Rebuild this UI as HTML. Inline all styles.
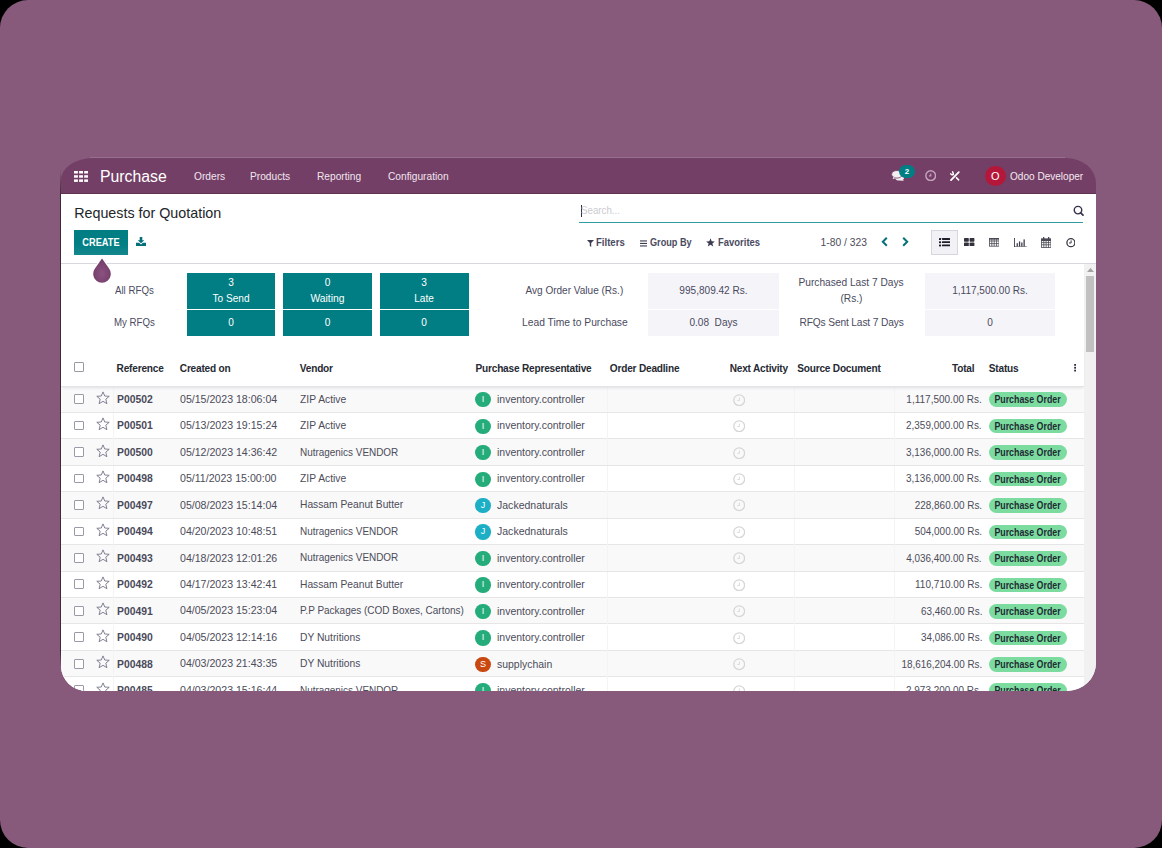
<!DOCTYPE html>
<html><head><meta charset="utf-8">
<style>
*{box-sizing:border-box;margin:0;padding:0}
html,body{width:1162px;height:848px;overflow:hidden;background:#000}
body{font-family:"Liberation Sans",sans-serif;position:relative}
.bg{position:absolute;left:0;top:0;width:1162px;height:848px;border-radius:28px;background:#875A7B}
.frame{position:absolute;left:61px;top:158px;width:1035px;height:533px;border-radius:32px 30px 29px 26px / 22px 25px 28px 25px;overflow:hidden;background:transparent}
.content{position:absolute;left:0;top:35px;width:1035px;height:498px;background:#fff}
.lline{position:absolute;left:60px;top:170px;width:1.2px;height:497px;background:linear-gradient(rgba(50,30,45,0),#3d2b37 5%,#3d2b37 97%,rgba(50,30,45,0))}
.nav{position:absolute;left:0;top:0;width:1040px;height:36px;background:#743F66;border-bottom:1px solid #5f3254}
.t{position:absolute;white-space:nowrap;line-height:1}
.b{font-weight:bold}
.nv{color:#f0e6ee;font-size:10.2px;top:13.6px}
.row{position:absolute;left:0;width:1023px;height:26.4px;border-bottom:1px solid #e6e6e6}
.row .t{top:8.5px;font-size:10.3px;color:#4c4c5a}
.cl{position:absolute;top:0;width:1px;height:26px;background:#f4f4f5}
.cb{position:absolute;left:13px;top:7.9px;width:9.8px;height:9.8px;border:1px solid #9a9aa6;border-radius:1px;background:#fff}
.star{position:absolute;left:35.2px;top:4.3px;width:14px;height:14px}
.ref{left:56px;font-size:10.35px!important;color:#4a4a5a!important}
.dt{left:119px;font-size:10.6px!important;top:7.4px!important}
.ven{left:239px;top:8.3px!important;transform-origin:0 50%}
.av{position:absolute;left:414.2px;top:5.8px;width:15.4px;height:15.4px;border-radius:50%;color:#fff;font-size:9px;text-align:center;line-height:15.4px}
.rep{left:435.5px;font-size:10.45px!important;transform-origin:0 50%}
.clk{position:absolute;left:671.5px;top:7.3px;width:12.4px;height:12.4px}
.tot{right:102px;text-align:right;font-size:10.2px!important;top:8.6px!important;transform-origin:100% 50%}
.badge{position:absolute;left:928px;top:6px;width:78px;height:14.5px;border-radius:8px;background:#7cdca0;color:#1e2b33;font-weight:bold;font-size:10px;line-height:15.3px;text-align:center}
.badge i{font-style:normal;display:inline-block;transform:scaleX(0.8823)}
.th{position:absolute;top:5px;font-size:10.1px;letter-spacing:-0.2px;font-weight:bold;color:#262a33;line-height:1;margin-top:-0.1px}
.dash{position:absolute;background:#017E84;color:#fff;font-size:10px;text-align:center}
.gbox{position:absolute;background:#f5f4f9;color:#4c4c5a;font-size:10px;text-align:center}
.lbl{position:absolute;color:#4a4a5e;font-size:10.1px;text-align:center;white-space:nowrap;line-height:1}
</style></head><body>
<div class="bg"></div>
<div class="lline"></div>
<div style="position:absolute;left:90px;top:157px;width:975px;height:1px;background:#96708c"></div>
<div class="frame">
  <div class="content"></div>
  <div class="nav">
    <svg style="position:absolute;left:12.9px;top:12.6px" width="14.2" height="11" viewBox="0 0 14.2 11"><g fill="#fff"><rect x="0" y="0" width="3.9" height="2.5"/><rect x="5.1" y="0" width="3.9" height="2.5"/><rect x="10.2" y="0" width="3.9" height="2.5"/><rect x="0" y="4.2" width="3.9" height="2.5"/><rect x="5.1" y="4.2" width="3.9" height="2.5"/><rect x="10.2" y="4.2" width="3.9" height="2.5"/><rect x="0" y="8.4" width="3.9" height="2.5"/><rect x="5.1" y="8.4" width="3.9" height="2.5"/><rect x="10.2" y="8.4" width="3.9" height="2.5"/></g></svg>
    <span class="t" style="left:39px;top:10.5px;font-size:15.8px;color:#fff">Purchase</span>
    <span class="t nv" style="left:133px">Orders</span>
    <span class="t nv" style="left:189px">Products</span>
    <span class="t nv" style="left:256px">Reporting</span>
    <span class="t nv" style="left:327px">Configuration</span>
    <!-- right icons -->
    <svg style="position:absolute;left:829.5px;top:12px" width="15" height="12" viewBox="0 0 15 12"><ellipse cx="8.6" cy="7.4" rx="4.6" ry="3.1" fill="#f3eef2"/><path d="M11.2 9.6 L13.3 11 L9.4 10.3Z" fill="#f3eef2"/><ellipse cx="6" cy="4.3" rx="5.4" ry="3.8" fill="#f3eef2" stroke="#743F66" stroke-width="0.8"/><path d="M2.2 7.1 L1.7 9.2 L4.6 7.9Z" fill="#f3eef2"/></svg>
    <span style="position:absolute;left:838px;top:7.1px;width:16.2px;height:13.3px;border-radius:7px;background:#017E84;color:#fff;font-size:8px;text-align:center;line-height:13.5px;font-weight:bold">2</span>
    <svg style="position:absolute;left:864px;top:11.8px" width="11.4" height="11.4" viewBox="0 0 11.4 11.4"><circle cx="5.7" cy="5.7" r="4.85" fill="none" stroke="#c4a3bd" stroke-width="1.45"/><path d="M5.8 3.6 V5.9 H3.9" fill="none" stroke="#c4a3bd" stroke-width="1.1"/></svg>
    <svg style="position:absolute;left:889px;top:13px" width="10" height="10" viewBox="0 0 10 10"><path d="M2.6 0.9 Q3.9 3.2 2.7 3.7 Q1.6 4.1 0.8 2.9" fill="none" stroke="#fff" stroke-width="1.5" stroke-linecap="round"/><path d="M3.2 3.5 L8.6 8.9" stroke="#fff" stroke-width="1.5" stroke-linecap="round"/><path d="M8.8 1.2 L1 9.2" stroke="#743F66" stroke-width="3.2"/><path d="M8.8 1.1 L1 9.1" stroke="#fff" stroke-width="1.8" stroke-linecap="round"/></svg>
    <span style="position:absolute;left:924px;top:7.5px;width:20.5px;height:20.5px;border-radius:50%;background:#b5173a;color:#fff;font-size:11px;text-align:center;line-height:20.5px">O</span>
    <span class="t nv" style="left:949px;color:#f3eaf1;font-size:10.2px;top:13.6px;transform:scaleX(0.9868);transform-origin:0 50%">Odoo Developer</span>
  </div>
  <!-- control panel -->
  <span class="t" style="left:13.2px;top:48px;font-size:14.3px;color:#212529">Requests for Quotation</span>
  <div style="position:absolute;left:13px;top:72px;width:54px;height:25px;background:linear-gradient(#017E84 55%,#14888d);color:#fff;font-weight:bold;font-size:9.24px;line-height:25px;text-align:center"><span style="display:inline-block;position:relative;top:1.2px;transform:scale(1,1.17);transform-origin:50% 56%">CREATE</span></div>
  <svg style="position:absolute;left:75px;top:79px" width="10" height="9" viewBox="0 0 10 9"><path d="M3.7 0 H6.3 V3.2 H8.3 L5 6.3 L1.7 3.2 H3.7 Z" fill="#04707d"/><path d="M0 5.8 H3.2 L5 7.4 L6.8 5.8 H10 V9 H0Z" fill="#04707d"/></svg>
  <!-- search -->
  <div style="position:absolute;left:517.5px;top:64px;width:504.5px;height:1px;background:#2e9ca1"></div>
  <div style="position:absolute;left:519.5px;top:46.5px;width:1px;height:12px;background:#333"></div>
  <span class="t" style="left:519.8px;top:47.6px;font-size:10.1px;color:#cbcbd0;transform:scaleX(0.9649);transform-origin:0 50%">Search...</span>
  <svg style="position:absolute;left:1011.5px;top:47px" width="11" height="11" viewBox="0 0 11 11"><circle cx="5" cy="5.1" r="3.75" fill="none" stroke="#34344a" stroke-width="1.45"/><path d="M7.7 7.8 L10 10.1" stroke="#34344a" stroke-width="1.7" stroke-linecap="round"/></svg>
  <!-- filters -->
  <svg style="position:absolute;left:525.5px;top:81.6px" width="7" height="7" viewBox="0 0 7 7"><path d="M0 0 H7 L4.2 3 V7 L2.8 6 V3Z" fill="#3c3c50"/></svg>
  <span class="t b" style="left:535px;top:80px;font-size:10.2px;color:#4a4a60;transform:scaleX(0.9409);transform-origin:0 50%">Filters</span>
  <svg style="position:absolute;left:578.8px;top:81.5px" width="7.5" height="7" viewBox="0 0 7.5 7"><g fill="#3c3c50"><rect x="0" y="0.4" width="7.5" height="1.1"/><rect x="0" y="2.9" width="7.5" height="1.1"/><rect x="0" y="5.4" width="7.5" height="1.1"/></g></svg>
  <span class="t b" style="left:588.5px;top:80px;font-size:10.2px;color:#4a4a60;transform:scaleX(0.8974);transform-origin:0 50%">Group By</span>
  <svg style="position:absolute;left:645px;top:80px" width="9" height="9" viewBox="0 0 10 10"><path d="M5 0.3 L6.3 3.6 L9.8 3.8 L7.1 6 L8 9.5 L5 7.6 L2 9.5 L2.9 6 L0.2 3.8 L3.7 3.6Z" fill="#3c3c50"/></svg>
  <span class="t b" style="left:656.5px;top:80px;font-size:10.2px;color:#4a4a60;transform:scaleX(0.9283);transform-origin:0 50%">Favorites</span>
  <!-- pager -->
  <span class="t" style="left:759.5px;top:80px;font-size:10.3px;color:#4c4c5a">1-80 / 323</span>
  <svg style="position:absolute;left:819.8px;top:79.3px" width="7" height="9.6" viewBox="0 0 7 9.6"><path d="M5.8 0.8 L1.8 4.8 L5.8 8.8" fill="none" stroke="#06707b" stroke-width="2"/></svg>
  <svg style="position:absolute;left:841.3px;top:79.3px" width="7" height="9.6" viewBox="0 0 7 9.6"><path d="M1.2 0.8 L5.2 4.8 L1.2 8.8" fill="none" stroke="#06707b" stroke-width="2"/></svg>
  <!-- view switcher -->
  <div style="position:absolute;left:870px;top:72px;width:27px;height:25px;background:#f2f1f6;border:1px solid #d6d6de"></div>
  <svg style="position:absolute;left:877.8px;top:80.3px" width="11.2" height="8.5" viewBox="0 0 11.2 8.5"><g fill="#1f1f2a"><rect x="0" y="0" width="2.1" height="2" rx="0.6"/><rect x="3" y="0.1" width="8.2" height="1.8" rx="0.4"/><rect x="0" y="3.2" width="2.1" height="2" rx="0.6"/><rect x="3" y="3.3" width="8.2" height="1.8" rx="0.4"/><rect x="0" y="6.4" width="2.1" height="2" rx="0.6"/><rect x="3" y="6.5" width="8.2" height="1.8" rx="0.4"/></g></svg>
  <svg style="position:absolute;left:903.3px;top:80px" width="10.4" height="8.4" viewBox="0 0 10.4 8.4"><g fill="#33333f"><rect x="0" y="0" width="4.8" height="3.8" rx="0.7"/><rect x="5.6" y="0" width="4.8" height="3.8" rx="0.7"/><rect x="0" y="4.6" width="4.8" height="3.8" rx="0.7"/><rect x="5.6" y="4.6" width="4.8" height="3.8" rx="0.7"/></g></svg>
  <svg style="position:absolute;left:928px;top:80px" width="10.4" height="8.6" viewBox="0 0 10.4 8.6"><g fill="none" stroke="#4a4a56" stroke-width="0.8"><rect x="0.4" y="0.4" width="9.6" height="7.8"/><path d="M0.4 3 H10 M0.4 5.6 H10 M2.8 0.4 V8.2 M5.2 0.4 V8.2 M7.6 0.4 V8.2"/></g><rect x="0" y="0" width="10.4" height="1.6" fill="#4a4a56"/></svg>
  <svg style="position:absolute;left:952.8px;top:79.6px" width="12.8" height="9.4" viewBox="0 0 12.8 9.4"><g fill="#3f3f4b"><rect x="0" y="0" width="0.9" height="9.4"/><rect x="0" y="8.5" width="12.8" height="0.9"/><rect x="2.6" y="5.2" width="1.3" height="3.3"/><rect x="4.9" y="3.4" width="1.3" height="5.1"/><rect x="7.2" y="4.5" width="1.3" height="4"/><rect x="9.5" y="1.4" width="1.3" height="7.1"/></g></svg>
  <svg style="position:absolute;left:979.7px;top:79px" width="10.3" height="11" viewBox="0 0 10.3 11"><g fill="none" stroke="#4a4a56" stroke-width="0.8"><rect x="0.4" y="2" width="9.5" height="8.6"/><path d="M0.4 5.6 H9.9 M0.4 7.8 H9.9 M2.8 4 V10.6 M5.15 4 V10.6 M7.5 4 V10.6"/></g><rect x="0" y="1.6" width="10.3" height="2.4" fill="#4a4a56"/><rect x="2" y="0" width="1.3" height="2.8" fill="#4a4a56"/><rect x="7" y="0" width="1.3" height="2.8" fill="#4a4a56"/></svg>
  <svg style="position:absolute;left:1004.5px;top:80.3px" width="9.8" height="9.4" viewBox="0 0 9.8 9.4"><circle cx="4.9" cy="4.7" r="4" fill="none" stroke="#3a3a46" stroke-width="1.3"/><path d="M5.1 2.4 V5 H3.1" fill="none" stroke="#3a3a46" stroke-width="1"/></svg>
  <!-- separator -->
  <div style="position:absolute;left:0;top:105px;width:1036px;height:1px;background:#d8d8e0"></div>
  <!-- scrollbar -->
  <div style="position:absolute;left:1023px;top:106px;width:13px;height:427px;background:#f1f1f1"></div>
  <div style="position:absolute;left:1024.6px;top:118px;width:8.4px;height:75.8px;background:#c1c1c1"></div>
  <svg style="position:absolute;left:1025px;top:109px" width="9" height="6" viewBox="0 0 9 6"><path d="M4.5 1 L8 5 H1Z" fill="#a3a3a3"/></svg>
  <!-- dashboard -->
  <span class="lbl" style="left:54px;top:127.5px;font-size:10.1px;transform:scaleX(0.9604);transform-origin:0 50%">All RFQs</span>
  <span class="lbl" style="left:53px;top:159.5px;font-size:10.1px;transform:scaleX(0.9592);transform-origin:0 50%">My RFQs</span>
  <div class="dash" style="left:126px;top:114.5px;width:88px;height:36.5px"></div>
  <div class="dash" style="left:222px;top:114.5px;width:89px;height:36.5px"></div>
  <div class="dash" style="left:318.5px;top:114.5px;width:89px;height:36.5px"></div>
  <div class="dash" style="left:126px;top:152px;width:88px;height:25.5px"></div>
  <div class="dash" style="left:222px;top:152px;width:89px;height:25.5px"></div>
  <div class="dash" style="left:318.5px;top:152px;width:89px;height:25.5px"></div>
  <span class="lbl" style="left:126px;width:88px;top:119.5px;color:#fff;font-size:10.1px">3</span>
  <span class="lbl" style="left:126px;width:88px;top:135.5px;color:#fff;font-size:10.08px">To Send</span>
  <span class="lbl" style="left:222px;width:89px;top:119.5px;color:#fff;font-size:10.1px">0</span>
  <span class="lbl" style="left:222px;width:89px;top:135.5px;color:#fff;font-size:10.3px">Waiting</span>
  <span class="lbl" style="left:318.5px;width:89px;top:119.5px;color:#fff;font-size:10.1px">3</span>
  <span class="lbl" style="left:318.5px;width:89px;top:135.5px;color:#fff;font-size:10.07px">Late</span>
  <span class="lbl" style="left:126px;width:88px;top:159.5px;color:#fff;font-size:10.1px">0</span>
  <span class="lbl" style="left:222px;width:89px;top:159.5px;color:#fff;font-size:10.1px">0</span>
  <span class="lbl" style="left:318.5px;width:89px;top:159.5px;color:#fff;font-size:10.1px">0</span>
  <div class="gbox" style="left:587px;top:114.5px;width:131px;height:36.5px"></div>
  <div class="gbox" style="left:587px;top:152px;width:131px;height:25.5px"></div>
  <div class="gbox" style="left:864px;top:114.5px;width:130px;height:36.5px"></div>
  <div class="gbox" style="left:864px;top:152px;width:130px;height:25.5px"></div>
  <span class="lbl" style="left:464.5px;top:127.5px;font-size:10.04px">Avg Order Value (Rs.)</span>
  <span class="lbl" style="left:461px;top:159.5px;font-size:10.29px">Lead Time to Purchase</span>
  <span class="lbl" style="left:587px;width:131px;top:127.5px;font-size:10.07px">995,809.42 Rs.</span>
  <span class="lbl" style="left:587px;width:131px;top:159.5px;font-size:10.07px">0.08&nbsp; Days</span>
  <span class="lbl" style="left:737.5px;top:120px;font-size:10.19px">Purchased Last 7 Days</span>
  <span class="lbl" style="left:737.5px;width:106px;top:135.5px;font-size:10.19px">(Rs.)</span>
  <span class="lbl" style="left:738.5px;top:159.5px;font-size:10.19px;letter-spacing:-0.13px">RFQs Sent Last 7 Days</span>
  <span class="lbl" style="left:864px;width:130px;top:127.5px;font-size:10.02px">1,117,500.00 Rs.</span>
  <span class="lbl" style="left:864px;width:130px;top:159.5px;font-size:10.1px">0</span>
  <!-- table header -->
  <div style="position:absolute;left:0;top:187px;width:1023px;height:42px;background:#fff;border-bottom:1px solid #e4e4e8;box-shadow:0 2px 3px -1px rgba(0,0,0,0.10);z-index:2">
    <span class="cb" style="top:17.2px"></span>
    <span class="th" style="left:55.6px;top:19px">Reference</span>
    <span class="th" style="left:118.8px;top:19px">Created on</span>
    <span class="th" style="left:238.8px;top:19px">Vendor</span>
    <span class="th" style="left:414.5px;top:19px">Purchase Representative</span>
    <span class="th" style="left:548.8px;top:19px">Order Deadline</span>
    <span class="th" style="left:668.7px;top:19px">Next Activity</span>
    <span class="th" style="left:736.2px;top:19px">Source Document</span>
    <span class="th" style="left:891px;top:19px">Total</span>
    <span class="th" style="left:927.8px;top:19px">Status</span>
    <svg style="position:absolute;left:1012.7px;top:19.3px" width="2.4" height="7.5" viewBox="0 0 2.4 7.5"><g fill="#2a2a3a"><rect x="0.2" y="0" width="1.8" height="1.8"/><rect x="0.2" y="2.85" width="1.8" height="1.8"/><rect x="0.2" y="5.7" width="1.8" height="1.8"/></g></svg>
  </div>
  <div style="position:absolute;left:0;top:228px;width:1023px;height:304px">
  </div>
  <div class="row" style="top:228.30px;background:#f9f9f9"><span class="cb"></span><i class="cl" style="left:52.3px"></i><i class="cl" style="left:546px"></i><i class="cl" style="left:732.5px"></i><i class="cl" style="left:833px"></i><svg class="star" viewBox="0 0 14 14"><path d="M7 0.9 L8.75 5 L13.2 5.3 L9.8 8.2 L10.9 12.7 L7 10.3 L3.1 12.7 L4.2 8.2 L0.8 5.3 L5.25 5 Z" fill="none" stroke="#74748a" stroke-width="0.9" stroke-linejoin="miter"/></svg><span class="t b ref">P00502</span><span class="t dt">05/15/2023 18:06:04</span><span class="t ven" style="font-size:10.2px;transform:scaleX(1.0124)">ZIP Active</span><span class="av" style="background:#24ad7a">I</span><span class="t rep" style="transform:scaleX(1.0045)">inventory.controller</span><svg class="clk" viewBox="0 0 12.4 12.4"><circle cx="6.2" cy="6.2" r="5.4" fill="none" stroke="#d6d6d8" stroke-width="1.3"/><path d="M6.4 3.6 V6.5 H4.4" fill="none" stroke="#d6d6d8" stroke-width="0.9"/></svg><span class="t tot" style="transform:scaleX(0.9827)">1,117,500.00 Rs.</span><span class="badge"><i>Purchase Order</i></span></div>
<div class="row" style="top:254.77px;background:#ffffff"><span class="cb"></span><i class="cl" style="left:52.3px"></i><i class="cl" style="left:546px"></i><i class="cl" style="left:732.5px"></i><i class="cl" style="left:833px"></i><svg class="star" viewBox="0 0 14 14"><path d="M7 0.9 L8.75 5 L13.2 5.3 L9.8 8.2 L10.9 12.7 L7 10.3 L3.1 12.7 L4.2 8.2 L0.8 5.3 L5.25 5 Z" fill="none" stroke="#74748a" stroke-width="0.9" stroke-linejoin="miter"/></svg><span class="t b ref">P00501</span><span class="t dt">05/13/2023 19:15:24</span><span class="t ven" style="font-size:10.2px;transform:scaleX(1.0124)">ZIP Active</span><span class="av" style="background:#24ad7a">I</span><span class="t rep" style="transform:scaleX(1.0045)">inventory.controller</span><svg class="clk" viewBox="0 0 12.4 12.4"><circle cx="6.2" cy="6.2" r="5.4" fill="none" stroke="#d6d6d8" stroke-width="1.3"/><path d="M6.4 3.6 V6.5 H4.4" fill="none" stroke="#d6d6d8" stroke-width="0.9"/></svg><span class="t tot" style="transform:scaleX(0.9731)">2,359,000.00 Rs.</span><span class="badge"><i>Purchase Order</i></span></div>
<div class="row" style="top:281.24px;background:#f9f9f9"><span class="cb"></span><i class="cl" style="left:52.3px"></i><i class="cl" style="left:546px"></i><i class="cl" style="left:732.5px"></i><i class="cl" style="left:833px"></i><svg class="star" viewBox="0 0 14 14"><path d="M7 0.9 L8.75 5 L13.2 5.3 L9.8 8.2 L10.9 12.7 L7 10.3 L3.1 12.7 L4.2 8.2 L0.8 5.3 L5.25 5 Z" fill="none" stroke="#74748a" stroke-width="0.9" stroke-linejoin="miter"/></svg><span class="t b ref">P00500</span><span class="t dt">05/12/2023 14:36:42</span><span class="t ven" style="font-size:10.2px;transform:scaleX(0.9752)">Nutragenics VENDOR</span><span class="av" style="background:#24ad7a">I</span><span class="t rep" style="transform:scaleX(1.0045)">inventory.controller</span><svg class="clk" viewBox="0 0 12.4 12.4"><circle cx="6.2" cy="6.2" r="5.4" fill="none" stroke="#d6d6d8" stroke-width="1.3"/><path d="M6.4 3.6 V6.5 H4.4" fill="none" stroke="#d6d6d8" stroke-width="0.9"/></svg><span class="t tot" style="transform:scaleX(0.9731)">3,136,000.00 Rs.</span><span class="badge"><i>Purchase Order</i></span></div>
<div class="row" style="top:307.71px;background:#ffffff"><span class="cb"></span><i class="cl" style="left:52.3px"></i><i class="cl" style="left:546px"></i><i class="cl" style="left:732.5px"></i><i class="cl" style="left:833px"></i><svg class="star" viewBox="0 0 14 14"><path d="M7 0.9 L8.75 5 L13.2 5.3 L9.8 8.2 L10.9 12.7 L7 10.3 L3.1 12.7 L4.2 8.2 L0.8 5.3 L5.25 5 Z" fill="none" stroke="#74748a" stroke-width="0.9" stroke-linejoin="miter"/></svg><span class="t b ref">P00498</span><span class="t dt">05/11/2023 15:00:00</span><span class="t ven" style="font-size:10.2px;transform:scaleX(1.0124)">ZIP Active</span><span class="av" style="background:#24ad7a">I</span><span class="t rep" style="transform:scaleX(1.0045)">inventory.controller</span><svg class="clk" viewBox="0 0 12.4 12.4"><circle cx="6.2" cy="6.2" r="5.4" fill="none" stroke="#d6d6d8" stroke-width="1.3"/><path d="M6.4 3.6 V6.5 H4.4" fill="none" stroke="#d6d6d8" stroke-width="0.9"/></svg><span class="t tot" style="transform:scaleX(0.9731)">3,136,000.00 Rs.</span><span class="badge"><i>Purchase Order</i></span></div>
<div class="row" style="top:334.18px;background:#f9f9f9"><span class="cb"></span><i class="cl" style="left:52.3px"></i><i class="cl" style="left:546px"></i><i class="cl" style="left:732.5px"></i><i class="cl" style="left:833px"></i><svg class="star" viewBox="0 0 14 14"><path d="M7 0.9 L8.75 5 L13.2 5.3 L9.8 8.2 L10.9 12.7 L7 10.3 L3.1 12.7 L4.2 8.2 L0.8 5.3 L5.25 5 Z" fill="none" stroke="#74748a" stroke-width="0.9" stroke-linejoin="miter"/></svg><span class="t b ref">P00497</span><span class="t dt">05/08/2023 15:14:04</span><span class="t ven" style="font-size:10.2px;transform:scaleX(1.0066)">Hassam Peanut Butter</span><span class="av" style="background:#1cafc5">J</span><span class="t rep" style="transform:scaleX(1.0087)">Jackednaturals</span><svg class="clk" viewBox="0 0 12.4 12.4"><circle cx="6.2" cy="6.2" r="5.4" fill="none" stroke="#d6d6d8" stroke-width="1.3"/><path d="M6.4 3.6 V6.5 H4.4" fill="none" stroke="#d6d6d8" stroke-width="0.9"/></svg><span class="t tot" style="transform:scaleX(0.9742)">228,860.00 Rs.</span><span class="badge"><i>Purchase Order</i></span></div>
<div class="row" style="top:360.65px;background:#ffffff"><span class="cb"></span><i class="cl" style="left:52.3px"></i><i class="cl" style="left:546px"></i><i class="cl" style="left:732.5px"></i><i class="cl" style="left:833px"></i><svg class="star" viewBox="0 0 14 14"><path d="M7 0.9 L8.75 5 L13.2 5.3 L9.8 8.2 L10.9 12.7 L7 10.3 L3.1 12.7 L4.2 8.2 L0.8 5.3 L5.25 5 Z" fill="none" stroke="#74748a" stroke-width="0.9" stroke-linejoin="miter"/></svg><span class="t b ref">P00494</span><span class="t dt">04/20/2023 10:48:51</span><span class="t ven" style="font-size:10.2px;transform:scaleX(0.9752)">Nutragenics VENDOR</span><span class="av" style="background:#1cafc5">J</span><span class="t rep" style="transform:scaleX(1.0087)">Jackednaturals</span><svg class="clk" viewBox="0 0 12.4 12.4"><circle cx="6.2" cy="6.2" r="5.4" fill="none" stroke="#d6d6d8" stroke-width="1.3"/><path d="M6.4 3.6 V6.5 H4.4" fill="none" stroke="#d6d6d8" stroke-width="0.9"/></svg><span class="t tot" style="transform:scaleX(0.9742)">504,000.00 Rs.</span><span class="badge"><i>Purchase Order</i></span></div>
<div class="row" style="top:387.12px;background:#f9f9f9"><span class="cb"></span><i class="cl" style="left:52.3px"></i><i class="cl" style="left:546px"></i><i class="cl" style="left:732.5px"></i><i class="cl" style="left:833px"></i><svg class="star" viewBox="0 0 14 14"><path d="M7 0.9 L8.75 5 L13.2 5.3 L9.8 8.2 L10.9 12.7 L7 10.3 L3.1 12.7 L4.2 8.2 L0.8 5.3 L5.25 5 Z" fill="none" stroke="#74748a" stroke-width="0.9" stroke-linejoin="miter"/></svg><span class="t b ref">P00493</span><span class="t dt">04/18/2023 12:01:26</span><span class="t ven" style="font-size:10.2px;transform:scaleX(0.9752)">Nutragenics VENDOR</span><span class="av" style="background:#24ad7a">I</span><span class="t rep" style="transform:scaleX(1.0045)">inventory.controller</span><svg class="clk" viewBox="0 0 12.4 12.4"><circle cx="6.2" cy="6.2" r="5.4" fill="none" stroke="#d6d6d8" stroke-width="1.3"/><path d="M6.4 3.6 V6.5 H4.4" fill="none" stroke="#d6d6d8" stroke-width="0.9"/></svg><span class="t tot" style="transform:scaleX(0.9705)">4,036,400.00 Rs.</span><span class="badge"><i>Purchase Order</i></span></div>
<div class="row" style="top:413.59px;background:#ffffff"><span class="cb"></span><i class="cl" style="left:52.3px"></i><i class="cl" style="left:546px"></i><i class="cl" style="left:732.5px"></i><i class="cl" style="left:833px"></i><svg class="star" viewBox="0 0 14 14"><path d="M7 0.9 L8.75 5 L13.2 5.3 L9.8 8.2 L10.9 12.7 L7 10.3 L3.1 12.7 L4.2 8.2 L0.8 5.3 L5.25 5 Z" fill="none" stroke="#74748a" stroke-width="0.9" stroke-linejoin="miter"/></svg><span class="t b ref">P00492</span><span class="t dt">04/17/2023 13:42:41</span><span class="t ven" style="font-size:10.2px;transform:scaleX(1.0066)">Hassam Peanut Butter</span><span class="av" style="background:#24ad7a">I</span><span class="t rep" style="transform:scaleX(1.0045)">inventory.controller</span><svg class="clk" viewBox="0 0 12.4 12.4"><circle cx="6.2" cy="6.2" r="5.4" fill="none" stroke="#d6d6d8" stroke-width="1.3"/><path d="M6.4 3.6 V6.5 H4.4" fill="none" stroke="#d6d6d8" stroke-width="0.9"/></svg><span class="t tot" style="transform:scaleX(0.9850)">110,710.00 Rs.</span><span class="badge"><i>Purchase Order</i></span></div>
<div class="row" style="top:440.06px;background:#f9f9f9"><span class="cb"></span><i class="cl" style="left:52.3px"></i><i class="cl" style="left:546px"></i><i class="cl" style="left:732.5px"></i><i class="cl" style="left:833px"></i><svg class="star" viewBox="0 0 14 14"><path d="M7 0.9 L8.75 5 L13.2 5.3 L9.8 8.2 L10.9 12.7 L7 10.3 L3.1 12.7 L4.2 8.2 L0.8 5.3 L5.25 5 Z" fill="none" stroke="#74748a" stroke-width="0.9" stroke-linejoin="miter"/></svg><span class="t b ref">P00491</span><span class="t dt">04/05/2023 15:23:04</span><span class="t ven" style="font-size:10.2px;transform:scaleX(0.9801)">P.P Packages (COD Boxes, Cartons)</span><span class="av" style="background:#24ad7a">I</span><span class="t rep" style="transform:scaleX(1.0045)">inventory.controller</span><svg class="clk" viewBox="0 0 12.4 12.4"><circle cx="6.2" cy="6.2" r="5.4" fill="none" stroke="#d6d6d8" stroke-width="1.3"/><path d="M6.4 3.6 V6.5 H4.4" fill="none" stroke="#d6d6d8" stroke-width="0.9"/></svg><span class="t tot" style="transform:scaleX(0.9699)">63,460.00 Rs.</span><span class="badge"><i>Purchase Order</i></span></div>
<div class="row" style="top:466.53px;background:#ffffff"><span class="cb"></span><i class="cl" style="left:52.3px"></i><i class="cl" style="left:546px"></i><i class="cl" style="left:732.5px"></i><i class="cl" style="left:833px"></i><svg class="star" viewBox="0 0 14 14"><path d="M7 0.9 L8.75 5 L13.2 5.3 L9.8 8.2 L10.9 12.7 L7 10.3 L3.1 12.7 L4.2 8.2 L0.8 5.3 L5.25 5 Z" fill="none" stroke="#74748a" stroke-width="0.9" stroke-linejoin="miter"/></svg><span class="t b ref">P00490</span><span class="t dt">04/05/2023 12:14:16</span><span class="t ven" style="font-size:10.2px;transform:scaleX(1.0083)">DY Nutritions</span><span class="av" style="background:#24ad7a">I</span><span class="t rep" style="transform:scaleX(1.0045)">inventory.controller</span><svg class="clk" viewBox="0 0 12.4 12.4"><circle cx="6.2" cy="6.2" r="5.4" fill="none" stroke="#d6d6d8" stroke-width="1.3"/><path d="M6.4 3.6 V6.5 H4.4" fill="none" stroke="#d6d6d8" stroke-width="0.9"/></svg><span class="t tot" style="transform:scaleX(0.9699)">34,086.00 Rs.</span><span class="badge"><i>Purchase Order</i></span></div>
<div class="row" style="top:493.00px;background:#f9f9f9"><span class="cb"></span><i class="cl" style="left:52.3px"></i><i class="cl" style="left:546px"></i><i class="cl" style="left:732.5px"></i><i class="cl" style="left:833px"></i><svg class="star" viewBox="0 0 14 14"><path d="M7 0.9 L8.75 5 L13.2 5.3 L9.8 8.2 L10.9 12.7 L7 10.3 L3.1 12.7 L4.2 8.2 L0.8 5.3 L5.25 5 Z" fill="none" stroke="#74748a" stroke-width="0.9" stroke-linejoin="miter"/></svg><span class="t b ref">P00488</span><span class="t dt">04/03/2023 21:43:35</span><span class="t ven" style="font-size:10.2px;transform:scaleX(1.0083)">DY Nutritions</span><span class="av" style="background:#c9480f">S</span><span class="t rep" style="transform:scaleX(1.0020)">supplychain</span><svg class="clk" viewBox="0 0 12.4 12.4"><circle cx="6.2" cy="6.2" r="5.4" fill="none" stroke="#d6d6d8" stroke-width="1.3"/><path d="M6.4 3.6 V6.5 H4.4" fill="none" stroke="#d6d6d8" stroke-width="0.9"/></svg><span class="t tot" style="transform:scaleX(0.9705)">18,616,204.00 Rs.</span><span class="badge"><i>Purchase Order</i></span></div>
<div class="row" style="top:519.47px;background:#ffffff"><span class="cb"></span><i class="cl" style="left:52.3px"></i><i class="cl" style="left:546px"></i><i class="cl" style="left:732.5px"></i><i class="cl" style="left:833px"></i><svg class="star" viewBox="0 0 14 14"><path d="M7 0.9 L8.75 5 L13.2 5.3 L9.8 8.2 L10.9 12.7 L7 10.3 L3.1 12.7 L4.2 8.2 L0.8 5.3 L5.25 5 Z" fill="none" stroke="#74748a" stroke-width="0.9" stroke-linejoin="miter"/></svg><span class="t b ref">P00485</span><span class="t dt">04/03/2023 15:16:44</span><span class="t ven" style="font-size:10.2px;transform:scaleX(0.9752)">Nutragenics VENDOR</span><span class="av" style="background:#24ad7a">I</span><span class="t rep" style="transform:scaleX(1.0045)">inventory.controller</span><svg class="clk" viewBox="0 0 12.4 12.4"><circle cx="6.2" cy="6.2" r="5.4" fill="none" stroke="#d6d6d8" stroke-width="1.3"/><path d="M6.4 3.6 V6.5 H4.4" fill="none" stroke="#d6d6d8" stroke-width="0.9"/></svg><span class="t tot" style="transform:scaleX(0.9731)">2,973,200.00 Rs.</span><span class="badge"><i>Purchase Order</i></span></div>
  <!-- tour drop -->
  <svg style="position:absolute;left:30.8px;top:100px" width="20" height="26" viewBox="-1 -1 20 26"><defs><radialGradient id="dg" cx="0.5" cy="0.62" r="0.55"><stop offset="0" stop-color="#8c5182"/><stop offset="1" stop-color="#733e69"/></radialGradient></defs><path d="M9 -0.5 L16.22 9.87 A8.8 8.8 0 1 1 1.78 9.87 Z" fill="#fff" stroke="#fff" stroke-width="2.6"/><path d="M9 -0.5 L16.22 9.87 A8.8 8.8 0 1 1 1.78 9.87 Z" fill="url(#dg)"/></svg>
</div>
</body></html>
